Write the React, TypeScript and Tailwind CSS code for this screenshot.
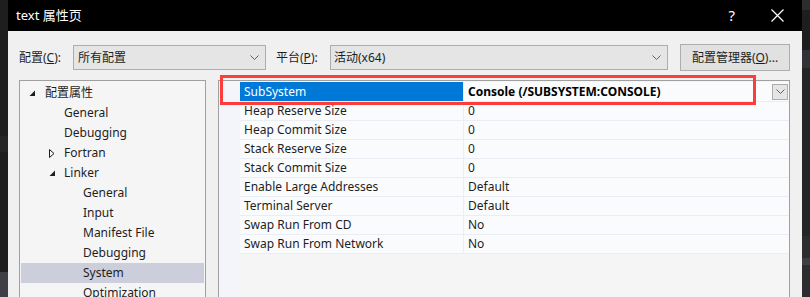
import React from "react";

const FONT = { fontFamily: '"Noto Sans", "Noto Sans CJK SC", sans-serif' };

type Prop = { name: string; value: string };

const props: Prop[] = [
  { name: "SubSystem", value: "Console (/SUBSYSTEM:CONSOLE)" },
  { name: "Heap Reserve Size", value: "0" },
  { name: "Heap Commit Size", value: "0" },
  { name: "Stack Reserve Size", value: "0" },
  { name: "Stack Commit Size", value: "0" },
  { name: "Enable Large Addresses", value: "Default" },
  { name: "Terminal Server", value: "Default" },
  { name: "Swap Run From CD", value: "No" },
  { name: "Swap Run From Network", value: "No" },
];

type TreeItem = { label: string; indent: number; arrow?: "open" | "closed"; selected?: boolean };

const tree: TreeItem[] = [
  { label: "配置属性", indent: 0, arrow: "open" },
  { label: "General", indent: 1 },
  { label: "Debugging", indent: 1 },
  { label: "Fortran", indent: 1, arrow: "closed" },
  { label: "Linker", indent: 1, arrow: "open" },
  { label: "General", indent: 2 },
  { label: "Input", indent: 2 },
  { label: "Manifest File", indent: 2 },
  { label: "Debugging", indent: 2 },
  { label: "System", indent: 2, selected: true },
  { label: "Optimization", indent: 2 },
];

function Chevron() {
  return (
    <svg width="9" height="5" viewBox="0 0 9 5" className="shrink-0">
      <path d="M0.5 0.5 L4.5 4.5 L8.5 0.5" fill="none" stroke="#606060" strokeWidth="1" />
    </svg>
  );
}

function Arrow({ kind }: { kind: "open" | "closed" }) {
  if (kind === "open") {
    return (
      <svg width="7" height="7" viewBox="0 0 7 7">
        <path d="M6 0.5 L6 6 L0.5 6 Z" fill="#1e1e1e" />
      </svg>
    );
  }
  return (
    <svg width="6" height="9" viewBox="0 0 6 9">
      <path d="M0.5 0.5 L5 4.5 L0.5 8.5 Z" fill="none" stroke="#1e1e1e" strokeWidth="1" />
    </svg>
  );
}

export default function App() {
  return (
    <div className="relative w-[810px] h-[297px] overflow-hidden flex bg-[#1e1e1e]" style={FONT}>
      {/* left editor strip */}
      <div className="w-[8px] flex flex-col">
        <div className="h-[136px] shrink-0 bg-[#1e1e1e]" />
        <div className="h-[16px] shrink-0 bg-[#252526]" />
        <div className="h-[120px] shrink-0 bg-[#1e1e1e]" />
        <div className="flex-1 bg-[#3f3f46]" />
      </div>

      {/* dialog */}
      <div className="w-[794px] h-[297px] flex flex-col overflow-hidden">
        <div className="h-[31px] shrink-0 bg-black flex items-center text-white text-[13px] pl-[8px]">
          <span>text 属性页</span>
          <span className="ml-auto text-[15px] mr-[36px]">?</span>
          <svg width="13" height="13" viewBox="0 0 13 13" className="mr-[18px]">
            <path d="M0.5 0.5 L12.5 12.5 M12.5 0.5 L0.5 12.5" stroke="#fff" strokeWidth="1.2" />
          </svg>
        </div>

        <div className="flex-1 min-h-0 overflow-hidden bg-[#f0f0f0] flex flex-col text-[12px] text-[#1e1e1e]">
          {/* config row */}
          <div className="flex shrink-0 items-center h-[27px] mt-[13px] pl-[11px]">
            <span className="w-[54px]">
              配置(<span className="underline">C</span>):
            </span>
            <div className="w-[193px] h-[25px] border border-[#adadad] bg-[#e5e5e5] flex items-center pl-[4px] pr-[6px]">
              <span>所有配置</span>
              <span className="ml-auto">
                <Chevron />
              </span>
            </div>
            <span className="ml-[10px] w-[54px]">
              平台(<span className="underline">P</span>):
            </span>
            <div className="w-[338px] h-[25px] border border-[#adadad] bg-[#e5e5e5] flex items-center pl-[3px] pr-[6px]">
              <span>活动(x64)</span>
              <span className="ml-auto">
                <Chevron />
              </span>
            </div>
            <div className="ml-[12px] w-[110px] h-[27px] border border-[#adadad] bg-[#e1e1e1] flex items-center justify-center">
              配置管理器(<span className="underline">O</span>)...
            </div>
          </div>

          {/* panels */}
          <div className="flex mt-[9px] pl-[11px] pr-[12px] flex-1 min-h-0 gap-[12px]">
            <div className="w-[187px] shrink-0 border border-[#a0a0a0] border-b-0 bg-[#f5f5f5] pt-[2px] px-[1px]">
              {tree.map((t, i) => (
                <div
                  key={i}
                  className={`h-[20px] flex items-center ${t.selected ? "bg-[#cccedb]" : ""}`}
                >
                  <span
                    className={`flex items-center justify-center w-[12px] ${
                      t.indent === 0 ? "ml-[5px]" : t.indent === 1 ? "ml-[25px]" : "ml-[44px]"
                    }`}
                  >
                    {t.arrow ? <Arrow kind={t.arrow} /> : null}
                  </span>
                  <span className={t.indent === 0 ? "ml-[7px]" : "ml-[6px]"}>{t.label}</span>
                </div>
              ))}
            </div>

            <div className="flex-1 border border-[#a0a0a0] border-b-0 bg-[#f5f5f5] flex">
              <div className="w-[21px] bg-[#f3f5fa]" />
              <div className="flex-1 pt-[1px]">
                {props.map((p, i) => {
                  const sel = i === 0;
                  return (
                    <div
                      key={i}
                      className={`${sel ? "h-[20px]" : "h-[19px]"} flex border-b border-[#eaedf3]`}
                    >
                      <div
                        className={`w-[224px] flex items-center pl-[4px] border-r border-[#eaedf3] ${
                          sel ? "bg-[#0078d7] text-white" : "bg-[#fafbfd]"
                        }`}
                      >
                        {p.name}
                      </div>
                      <div className="flex-1 flex items-center pl-[4px] pr-[1px] bg-[#fafbfd]">
                        <span className={sel ? "font-bold text-black" : ""}>{p.value}</span>
                        {sel ? (
                          <div className="ml-auto w-[16px] h-[16px] border border-[#adadad] bg-[#e5e5e5] flex items-center justify-center">
                            <Chevron />
                          </div>
                        ) : null}
                      </div>
                    </div>
                  );
                })}
              </div>
            </div>
          </div>
        </div>
      </div>

      {/* right editor strip */}
      <div className="w-[8px] flex flex-col">
        <div className="h-[10px] shrink-0 bg-[#2d2d30]" />
        <div className="h-[40px] shrink-0 bg-[#1e1e1e]" />
        <div className="h-[18px] shrink-0 bg-[#333337]" />
        <div className="h-[168px] shrink-0 bg-[#252526]" />
        <div className="h-[22px] shrink-0 bg-[#2d2d30]" />
        <div className="h-[7px] shrink-0 bg-[#3e3e42]" />
        <div className="flex-1 bg-[#2d2d30]" />
      </div>

      {/* red annotation */}
      <div className="absolute left-[220px] top-[75px] w-[536px] h-[30px] border-[3px] border-[#ff3c3c]" />
    </div>
  );
}
